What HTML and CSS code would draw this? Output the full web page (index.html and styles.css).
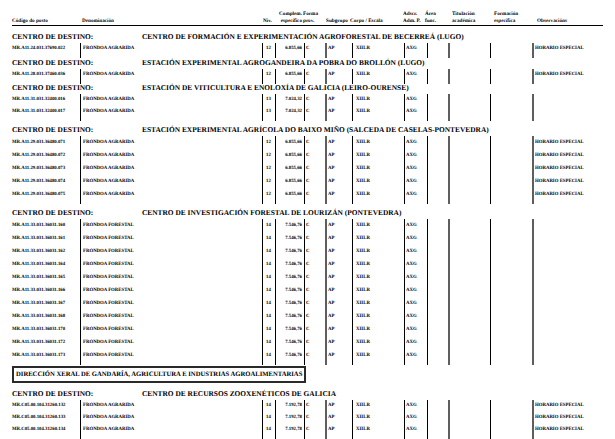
FILE: index.html
```html
<!DOCTYPE html>
<html lang="gl">
<head>
<meta charset="utf-8">
<title>Relación de postos</title>
<link rel="stylesheet" href="styles.css">
</head>
<body>
<div class="page">
  <div class="thead">
    <div class="th">&nbsp;<br>Código do posto</div>
    <div class="th">&nbsp;<br>Denominación</div>
    <div class="th">&nbsp;<br>Niv.</div>
    <div class="th th-comp">Complem.<br>específico</div>
    <div class="th">Forma<br>prov.</div>
    <div class="th">&nbsp;<br>Subgrupo</div>
    <div class="th">&nbsp;<br>Corpo / Escala</div>
    <div class="th">Adscr.<br>Adm. P.</div>
    <div class="th">Área<br>func.</div>
    <div class="th">Titulación<br>académica</div>
    <div class="th">Formación<br>específica</div>
    <div class="th">&nbsp;<br>Observacións</div>
  </div>

  <section class="sec sec-first">
    <div class="sec-head"><span class="sec-label">CENTRO DE DESTINO:</span><span class="sec-title">CENTRO DE FORMACIÓN E EXPERIMENTACIÓN AGROFORESTAL DE BECERREÁ (LUGO)</span></div>
    <div class="row"><span class="c-code">MR.A11.24.031.37690.022</span><span class="c-den">FRÓNDOA AGRARIDA</span><span class="c-niv">12</span><span class="c-comp">6.855,66</span><span class="c-forma">C</span><span class="c-sub">AP</span><span class="c-corpo">XIILR</span><span class="c-adscr">AXG</span><span class="c-area"></span><span class="c-tit"></span><span class="c-form"></span><span class="c-obs">HORARIO ESPECIAL</span></div>
    <div class="row row-end"><span class="c-code"></span><span class="c-den"></span><span class="c-niv"></span><span class="c-comp"></span><span class="c-forma"></span><span class="c-sub"></span><span class="c-corpo"></span><span class="c-adscr"></span><span class="c-area"></span><span class="c-tit"></span><span class="c-form"></span><span class="c-obs"></span></div>
  </section>

  <section class="sec sec-tight">
    <div class="sec-head"><span class="sec-label">CENTRO DE DESTINO:</span><span class="sec-title">ESTACIÓN EXPERIMENTAL AGROGANDEIRA DA POBRA DO BROLLÓN (LUGO)</span></div>
    <div class="row"><span class="c-code">MR.A11.28.031.37460.036</span><span class="c-den">FRÓNDOA AGRARIDA</span><span class="c-niv">12</span><span class="c-comp">6.855,66</span><span class="c-forma">C</span><span class="c-sub">AP</span><span class="c-corpo">XIILR</span><span class="c-adscr">AXG</span><span class="c-area"></span><span class="c-tit"></span><span class="c-form"></span><span class="c-obs">HORARIO ESPECIAL</span></div>
    <div class="row row-end"><span class="c-code"></span><span class="c-den"></span><span class="c-niv"></span><span class="c-comp"></span><span class="c-forma"></span><span class="c-sub"></span><span class="c-corpo"></span><span class="c-adscr"></span><span class="c-area"></span><span class="c-tit"></span><span class="c-form"></span><span class="c-obs"></span></div>
  </section>

  <section class="sec sec-tighter">
    <div class="sec-head"><span class="sec-label">CENTRO DE DESTINO:</span><span class="sec-title">ESTACIÓN DE VITICULTURA E ENOLOXÍA DE GALICIA (LEIRO-OURENSE)</span></div>
    <div class="row"><span class="c-code">MR.A11.31.031.32400.016</span><span class="c-den">FRÓNDOA AGRARIDA</span><span class="c-niv">13</span><span class="c-comp">7.024,32</span><span class="c-forma">C</span><span class="c-sub">AP</span><span class="c-corpo">XIILR</span><span class="c-adscr">AXG</span><span class="c-area"></span><span class="c-tit"></span><span class="c-form"></span><span class="c-obs"></span></div>
    <div class="row"><span class="c-code">MR.A11.31.031.32400.017</span><span class="c-den">FRÓNDOA AGRARIDA</span><span class="c-niv">13</span><span class="c-comp">7.024,32</span><span class="c-forma">C</span><span class="c-sub">AP</span><span class="c-corpo">XIILR</span><span class="c-adscr">AXG</span><span class="c-area"></span><span class="c-tit"></span><span class="c-form"></span><span class="c-obs"></span></div>
    <div class="row row-end"><span class="c-code"></span><span class="c-den"></span><span class="c-niv"></span><span class="c-comp"></span><span class="c-forma"></span><span class="c-sub"></span><span class="c-corpo"></span><span class="c-adscr"></span><span class="c-area"></span><span class="c-tit"></span><span class="c-form"></span><span class="c-obs"></span></div>
  </section>

  <section class="sec sec-tall">
    <div class="sec-head"><span class="sec-label">CENTRO DE DESTINO:</span><span class="sec-title">ESTACIÓN EXPERIMENTAL AGRÍCOLA DO BAIXO MIÑO (SALCEDA DE CASELAS-PONTEVEDRA)</span></div>
    <div class="row"><span class="c-code">MR.A11.29.031.36480.071</span><span class="c-den">FRÓNDOA AGRARIDA</span><span class="c-niv">12</span><span class="c-comp">6.855,66</span><span class="c-forma">C</span><span class="c-sub">AP</span><span class="c-corpo">XIILR</span><span class="c-adscr">AXG</span><span class="c-area"></span><span class="c-tit"></span><span class="c-form"></span><span class="c-obs">HORARIO ESPECIAL</span></div>
    <div class="row"><span class="c-code">MR.A11.29.031.36480.072</span><span class="c-den">FRÓNDOA AGRARIDA</span><span class="c-niv">12</span><span class="c-comp">6.855,66</span><span class="c-forma">C</span><span class="c-sub">AP</span><span class="c-corpo">XIILR</span><span class="c-adscr">AXG</span><span class="c-area"></span><span class="c-tit"></span><span class="c-form"></span><span class="c-obs">HORARIO ESPECIAL</span></div>
    <div class="row"><span class="c-code">MR.A11.29.031.36480.073</span><span class="c-den">FRÓNDOA AGRARIDA</span><span class="c-niv">12</span><span class="c-comp">6.855,66</span><span class="c-forma">C</span><span class="c-sub">AP</span><span class="c-corpo">XIILR</span><span class="c-adscr">AXG</span><span class="c-area"></span><span class="c-tit"></span><span class="c-form"></span><span class="c-obs">HORARIO ESPECIAL</span></div>
    <div class="row"><span class="c-code">MR.A11.29.031.36480.074</span><span class="c-den">FRÓNDOA AGRARIDA</span><span class="c-niv">12</span><span class="c-comp">6.855,66</span><span class="c-forma">C</span><span class="c-sub">AP</span><span class="c-corpo">XIILR</span><span class="c-adscr">AXG</span><span class="c-area"></span><span class="c-tit"></span><span class="c-form"></span><span class="c-obs">HORARIO ESPECIAL</span></div>
    <div class="row"><span class="c-code">MR.A11.29.031.36480.075</span><span class="c-den">FRÓNDOA AGRARIDA</span><span class="c-niv">12</span><span class="c-comp">6.855,66</span><span class="c-forma">C</span><span class="c-sub">AP</span><span class="c-corpo">XIILR</span><span class="c-adscr">AXG</span><span class="c-area"></span><span class="c-tit"></span><span class="c-form"></span><span class="c-obs">HORARIO ESPECIAL</span></div>
    <div class="row row-end"><span class="c-code"></span><span class="c-den"></span><span class="c-niv"></span><span class="c-comp"></span><span class="c-forma"></span><span class="c-sub"></span><span class="c-corpo"></span><span class="c-adscr"></span><span class="c-area"></span><span class="c-tit"></span><span class="c-form"></span><span class="c-obs"></span></div>
  </section>

  <section class="sec sec-tall">
    <div class="sec-head"><span class="sec-label">CENTRO DE DESTINO:</span><span class="sec-title">CENTRO DE INVESTIGACIÓN FORESTAL DE LOURIZÁN (PONTEVEDRA)</span></div>
    <div class="row"><span class="c-code">MR.A11.33.031.36031.160</span><span class="c-den">FRÓNDOA FORESTAL</span><span class="c-niv">14</span><span class="c-comp">7.546,76</span><span class="c-forma">C</span><span class="c-sub">AP</span><span class="c-corpo">XIILR</span><span class="c-adscr">AXG</span><span class="c-area"></span><span class="c-tit"></span><span class="c-form"></span><span class="c-obs"></span></div>
    <div class="row"><span class="c-code">MR.A11.33.031.36031.161</span><span class="c-den">FRÓNDOA FORESTAL</span><span class="c-niv">14</span><span class="c-comp">7.546,76</span><span class="c-forma">C</span><span class="c-sub">AP</span><span class="c-corpo">XIILR</span><span class="c-adscr">AXG</span><span class="c-area"></span><span class="c-tit"></span><span class="c-form"></span><span class="c-obs"></span></div>
    <div class="row"><span class="c-code">MR.A11.33.031.36031.162</span><span class="c-den">FRÓNDOA FORESTAL</span><span class="c-niv">14</span><span class="c-comp">7.546,76</span><span class="c-forma">C</span><span class="c-sub">AP</span><span class="c-corpo">XIILR</span><span class="c-adscr">AXG</span><span class="c-area"></span><span class="c-tit"></span><span class="c-form"></span><span class="c-obs"></span></div>
    <div class="row"><span class="c-code">MR.A11.33.031.36031.164</span><span class="c-den">FRÓNDOA FORESTAL</span><span class="c-niv">14</span><span class="c-comp">7.546,76</span><span class="c-forma">C</span><span class="c-sub">AP</span><span class="c-corpo">XIILR</span><span class="c-adscr">AXG</span><span class="c-area"></span><span class="c-tit"></span><span class="c-form"></span><span class="c-obs"></span></div>
    <div class="row"><span class="c-code">MR.A11.33.031.36031.165</span><span class="c-den">FRÓNDOA FORESTAL</span><span class="c-niv">14</span><span class="c-comp">7.546,76</span><span class="c-forma">C</span><span class="c-sub">AP</span><span class="c-corpo">XIILR</span><span class="c-adscr">AXG</span><span class="c-area"></span><span class="c-tit"></span><span class="c-form"></span><span class="c-obs"></span></div>
    <div class="row"><span class="c-code">MR.A11.33.031.36031.166</span><span class="c-den">FRÓNDOA FORESTAL</span><span class="c-niv">14</span><span class="c-comp">7.546,76</span><span class="c-forma">C</span><span class="c-sub">AP</span><span class="c-corpo">XIILR</span><span class="c-adscr">AXG</span><span class="c-area"></span><span class="c-tit"></span><span class="c-form"></span><span class="c-obs"></span></div>
    <div class="row"><span class="c-code">MR.A11.33.031.36031.167</span><span class="c-den">FRÓNDOA FORESTAL</span><span class="c-niv">14</span><span class="c-comp">7.546,76</span><span class="c-forma">C</span><span class="c-sub">AP</span><span class="c-corpo">XIILR</span><span class="c-adscr">AXG</span><span class="c-area"></span><span class="c-tit"></span><span class="c-form"></span><span class="c-obs"></span></div>
    <div class="row"><span class="c-code">MR.A11.33.031.36031.168</span><span class="c-den">FRÓNDOA FORESTAL</span><span class="c-niv">14</span><span class="c-comp">7.546,76</span><span class="c-forma">C</span><span class="c-sub">AP</span><span class="c-corpo">XIILR</span><span class="c-adscr">AXG</span><span class="c-area"></span><span class="c-tit"></span><span class="c-form"></span><span class="c-obs"></span></div>
    <div class="row"><span class="c-code">MR.A11.33.031.36031.170</span><span class="c-den">FRÓNDOA FORESTAL</span><span class="c-niv">14</span><span class="c-comp">7.546,76</span><span class="c-forma">C</span><span class="c-sub">AP</span><span class="c-corpo">XIILR</span><span class="c-adscr">AXG</span><span class="c-area"></span><span class="c-tit"></span><span class="c-form"></span><span class="c-obs"></span></div>
    <div class="row"><span class="c-code">MR.A11.33.031.36031.172</span><span class="c-den">FRÓNDOA FORESTAL</span><span class="c-niv">14</span><span class="c-comp">7.546,76</span><span class="c-forma">C</span><span class="c-sub">AP</span><span class="c-corpo">XIILR</span><span class="c-adscr">AXG</span><span class="c-area"></span><span class="c-tit"></span><span class="c-form"></span><span class="c-obs"></span></div>
    <div class="row"><span class="c-code">MR.A11.33.031.36031.173</span><span class="c-den">FRÓNDOA FORESTAL</span><span class="c-niv">14</span><span class="c-comp">7.546,76</span><span class="c-forma">C</span><span class="c-sub">AP</span><span class="c-corpo">XIILR</span><span class="c-adscr">AXG</span><span class="c-area"></span><span class="c-tit"></span><span class="c-form"></span><span class="c-obs"></span></div>
    <div class="row row-end"><span class="c-code"></span><span class="c-den"></span><span class="c-niv"></span><span class="c-comp"></span><span class="c-forma"></span><span class="c-sub"></span><span class="c-corpo"></span><span class="c-adscr"></span><span class="c-area"></span><span class="c-tit"></span><span class="c-form"></span><span class="c-obs"></span></div>
  </section>

  <div class="dir">DIRECCIÓN XERAL DE GANDARÍA, AGRICULTURA E INDUSTRIAS AGROALIMENTARIAS</div>

  <section class="sec sec-after-dir">
    <div class="sec-head"><span class="sec-label">CENTRO DE DESTINO:</span><span class="sec-title">CENTRO DE RECURSOS ZOOXENÉTICOS DE GALICIA</span></div>
    <div class="row"><span class="c-code">MR.C05.00.104.31260.132</span><span class="c-den">FRÓNDOA AGRARIDA</span><span class="c-niv">14</span><span class="c-comp">7.192,78</span><span class="c-forma">C</span><span class="c-sub">AP</span><span class="c-corpo">XIILR</span><span class="c-adscr">AXG</span><span class="c-area"></span><span class="c-tit"></span><span class="c-form"></span><span class="c-obs">HORARIO ESPECIAL</span></div>
    <div class="row"><span class="c-code">MR.C05.00.104.31260.133</span><span class="c-den">FRÓNDOA AGRARIDA</span><span class="c-niv">14</span><span class="c-comp">7.192,78</span><span class="c-forma">C</span><span class="c-sub">AP</span><span class="c-corpo">XIILR</span><span class="c-adscr">AXG</span><span class="c-area"></span><span class="c-tit"></span><span class="c-form"></span><span class="c-obs">HORARIO ESPECIAL</span></div>
    <div class="row"><span class="c-code">MR.C05.00.104.31260.134</span><span class="c-den">FRÓNDOA AGRARIDA</span><span class="c-niv">14</span><span class="c-comp">7.192,78</span><span class="c-forma">C</span><span class="c-sub">AP</span><span class="c-corpo">XIILR</span><span class="c-adscr">AXG</span><span class="c-area"></span><span class="c-tit"></span><span class="c-form"></span><span class="c-obs">HORARIO ESPECIAL</span></div>
    <div class="row row-end"><span class="c-code"></span><span class="c-den"></span><span class="c-niv"></span><span class="c-comp"></span><span class="c-forma"></span><span class="c-sub"></span><span class="c-corpo"></span><span class="c-adscr"></span><span class="c-area"></span><span class="c-tit"></span><span class="c-form"></span><span class="c-obs"></span></div>
  </section>
</div>
</body>
</html>
```

FILE: styles.css
```css
html, body {
  margin: 0;
  padding: 0;
  background: #fff;
}

body {
  color: #000;
  font-family: "Liberation Serif", "Times New Roman", serif;
  font-weight: bold;
  text-rendering: geometricPrecision;
}

.page {
  width: 591px;
  padding: 11px 12px 0 12px;
}

/* column headings */
.thead {
  display: grid;
  grid-template-columns: 70px 181px 13px 27px 23px 24px 53px 22px 27px 42px 43px 66px;
  font-size: 5.2px;
  line-height: 7px;
  white-space: nowrap;
  border-bottom: 1px solid #000;
}

.th-comp {
  text-align: right;
  padding-right: 1px;
}

/* section heading */
.sec-head {
  display: flex;
  height: 12px;
  line-height: 12px;
  font-size: 7.4px;
  white-space: nowrap;
}

.sec-label {
  width: 130px;
  flex: none;
}

.sec-first { margin-top: 5px; }
.sec-tight { margin-top: -1px; }
.sec-tighter { margin-top: -2px; }
.sec-tall { margin-top: 3px; }
.sec-after-dir { margin-top: 5px; }

/* data rows */
.row {
  display: grid;
  grid-template-columns: 68px 182px 13px 29px 21px 27px 52px 23px 21px 42px 42px 71px;
  height: 12px;
  line-height: 12px;
  font-size: 4.8px;
  white-space: nowrap;
}

.sec-tall .row {
  height: 13px;
  line-height: 13px;
}

.row > span {
  box-sizing: border-box;
  overflow: hidden;
}

.row.row-end,
.sec-tall .row.row-end {
  height: 3px;
  line-height: 3px;
}

.c-den,
.c-niv,
.c-comp,
.c-forma,
.c-corpo,
.c-adscr,
.c-area,
.c-form {
  border-left: 1px solid #000;
}

.c-sub,
.c-tit,
.c-obs {
  border-left: 2px solid #5e5e5e;
}

.c-den { padding-left: 2px; }
.c-niv { padding-left: 3px; }
.c-comp { text-align: right; padding-right: 2px; }
.c-forma { padding-left: 1px; }
.c-sub { padding-left: 1px; }
.c-corpo { padding-left: 3px; }
.c-adscr { padding-left: 1px; }
.c-obs { padding-left: 1px; }

/* directorate box */
.dir {
  display: inline-block;
  margin-top: 1px;
  border: 2px solid #2a2a2a;
  padding: 0 2px;
  height: 13px;
  line-height: 13px;
  font-size: 6.65px;
  white-space: nowrap;
  vertical-align: top;
}
```
